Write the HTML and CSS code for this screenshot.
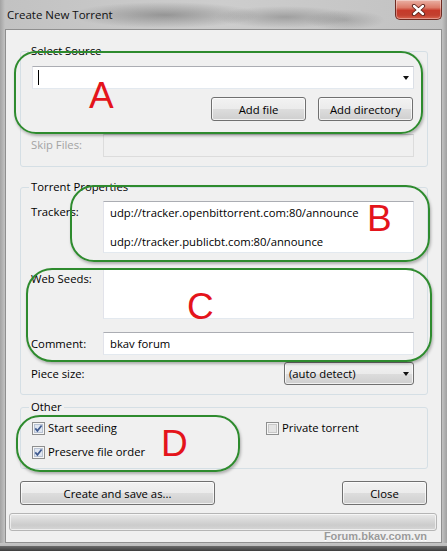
FILE: index.html
```html
<!DOCTYPE html>
<html>
<head>
<meta charset="utf-8">
<title>Create New Torrent</title>
<link rel="stylesheet" href="styles.css">
</head>
<body>
<div class="window">
  <div class="titlebar">
    <span class="title">Create New Torrent</span>
    <div class="close">
      <svg width="15" height="12" viewBox="0 0 15 12">
        <path d="M3 2 L12 10 M12 2 L3 10" stroke="#5a2019" stroke-width="4.2" stroke-linecap="round"/>
        <path d="M3 2 L12 10 M12 2 L3 10" stroke="#ffffff" stroke-width="2.4" stroke-linecap="round"/>
      </svg>
    </div>
  </div>
  <div class="client">
    <fieldset class="group g-source">
      <legend>Select Source</legend>
      <div class="combo edit"><span class="caret"></span><span class="arrow"></span></div>
      <div class="btnrow">
        <button class="btn w95">Add file</button>
        <button class="btn w95">Add directory</button>
      </div>
      <div class="row">
        <span class="lbl disabled">Skip Files:</span>
        <div class="input h23 dis"></div>
      </div>
    </fieldset>

    <fieldset class="group g-props">
      <legend>Torrent Properties</legend>
      <div class="row">
        <span class="lbl">Trackers:</span>
        <div class="input h52 multi">
          <div class="line">udp://tracker.openbittorrent.com:80/announce</div>
          <div class="line l2">udp://tracker.publicbt.com:80/announce</div>
        </div>
      </div>
      <div class="row mt15">
        <span class="lbl">Web Seeds:</span>
        <div class="input h51"></div>
      </div>
      <div class="row mt13">
        <span class="lbl pt5">Comment:</span>
        <div class="input h23 single">bkav forum</div>
      </div>
      <div class="row mt7 between">
        <span class="lbl pt5">Piece size:</span>
        <div class="dropdown">(auto detect)<span class="arrow"></span></div>
      </div>
    </fieldset>

    <fieldset class="group g-other">
      <legend>Other</legend>
      <div class="checks">
        <label class="chk"><svg class="cb" width="13" height="13" viewBox="0 0 13 13"><rect x="0.5" y="0.5" width="12" height="12" fill="#f6f6f6" stroke="#8e8f8f"/><rect x="2.5" y="2.5" width="8" height="8" fill="#dfe6f1" stroke="#b9c3d3"/><path d="M3.3 6.4 L5.4 8.8 L9.6 3.4" stroke="#3f5a8f" stroke-width="1.7" fill="none"/></svg><span>Start seeding</span></label>
        <label class="chk"><svg class="cb" width="13" height="13" viewBox="0 0 13 13"><rect x="0.5" y="0.5" width="12" height="12" fill="#f6f6f6" stroke="#8e8f8f"/><rect x="2.5" y="2.5" width="8" height="8" fill="#e4e4e4" stroke="#c8c8c8"/></svg><span>Private torrent</span></label>
        <label class="chk"><svg class="cb" width="13" height="13" viewBox="0 0 13 13"><rect x="0.5" y="0.5" width="12" height="12" fill="#f6f6f6" stroke="#8e8f8f"/><rect x="2.5" y="2.5" width="8" height="8" fill="#dfe6f1" stroke="#b9c3d3"/><path d="M3.3 6.4 L5.4 8.8 L9.6 3.4" stroke="#3f5a8f" stroke-width="1.7" fill="none"/></svg><span>Preserve file order</span></label>
      </div>
    </fieldset>

    <div class="actions">
      <button class="btn create">Create and save as...</button>
      <button class="btn closebtn">Close</button>
    </div>
    <div class="progress"></div>
    <div class="watermark">Forum.bkav.com.vn</div>

    <div class="mark ma"></div>
    <div class="mark mb"></div>
    <div class="mark mc"></div>
    <div class="mark md"></div>
    <span class="letter la">A</span>
    <span class="letter lb">B</span>
    <span class="letter lc">C</span>
    <span class="letter ld">D</span>
  </div>
  <div class="frame-bottom"></div>
</div>
</body>
</html>
```

FILE: styles.css
```css
* { box-sizing: border-box; }
html, body { margin: 0; padding: 0; }
body {
  width: 447px;
  height: 551px;
  overflow: hidden;
  font-family: "Open Sans", "Noto Sans", sans-serif;
  font-size: 11.3px;
  color: #000;
}
.window {
  width: 447px;
  height: 551px;
  display: flex;
  flex-direction: column;
  background:
    radial-gradient(ellipse 95px 13px at 165px 15px, rgba(70,70,70,.40), rgba(70,70,70,0)),
    radial-gradient(ellipse 70px 11px at 285px 17px, rgba(80,80,80,.35), rgba(80,80,80,0)),
    radial-gradient(ellipse 40px 10px at 345px 20px, rgba(90,90,90,.28), rgba(90,90,90,0)),
    linear-gradient(90deg, #a3a3a3 0, #c2c2c2 5px, #cdcdcd 50%, #c2c2c2 442px, #a0a0a0 447px);
}
.titlebar {
  height: 29px;
  flex: none;
  display: flex;
  align-items: flex-start;
}
.title {
  padding: 8px 0 0 7px;
  line-height: 14px;
  font-size: 11.5px;
  color: #111;
}
.close {
  margin-left: auto;
  margin-right: 5px;
  width: 47px;
  height: 20px;
  border: 1px solid #6e2b22;
  border-top: none;
  border-radius: 0 0 5px 5px;
  background: linear-gradient(#eab1a5 0, #dc7b69 40%, #c63a2a 55%, #c2402f 80%, #d9644f 100%);
  box-shadow: inset 0 0 0 1px rgba(255,255,255,.35);
  display: flex;
  align-items: center;
  justify-content: center;
}
.client {
  position: relative;
  margin: 0 5px 0 5px;
  height: 514px;
  flex: none;
  background: #f0f0f0;
  border: 1px solid #8f8f8f;
  padding-top: 14px;
  display: flex;
  flex-direction: column;
  overflow: hidden;
}
.frame-bottom {
  flex: 1;
  background: linear-gradient(#c4c4c4 0, #bcbcbc 3px, #6b6b6b 3px, #3d3d3d 100%);
}

/* group boxes */
.group {
  margin: 0 13px 0 14px;
  border: 1px solid #d5dfe5;
  border-radius: 3px;
  padding: 8px 13px 9px 11px;
  min-width: 0;
}
.group legend {
  padding: 0 2px;
  margin-left: -3px;
  line-height: 14px;
  font-size: 11.3px;
}
.g-props { margin-top: 13px; padding-top: 7px; }
.g-other { margin-top: 5px; padding-top: 1px; padding-bottom: 4px; }

.row { display: flex; align-items: flex-start; }
.between { justify-content: space-between; }
.mt15 { margin-top: 15px; }
.mt13 { margin-top: 13px; }
.mt7 { margin-top: 7px; }
.lbl {
  width: 72px;
  flex: none;
  margin-left: -1px;
  line-height: 14px;
  padding-top: 4px;
}
.lbl.pt5 { padding-top: 5px; }
.disabled { color: #a3a3a3; }

.input {
  flex: 1;
  background: #fff;
  border: 1px solid;
  border-color: #abadb3 #dbdfe6 #e3e9ef #e2e3ea;
}
.input.dis { background: #f0f0f0; border-color: #c9cacd #dcdcdc #dcdcdc #dcdcdc; }
.h23 { height: 23px; }
.h52 { height: 52px; }
.h51 { height: 51px; }
.multi { padding: 4px 6px 0; }
.line { line-height: 14px; white-space: nowrap; }
.line.l2 { margin-top: 15px; }
.single { padding: 3px 6px 0; line-height: 15px; }

.combo {
  height: 23px;
  display: flex;
  align-items: center;
  justify-content: space-between;
  border: 1px solid;
  border-color: #abadb3 #dbdfe6 #e3e9ef #e2e3ea;
  background: #fff;
  padding: 0 4px 0 5px;
}
.caret { width: 1px; height: 15px; background: #000; }
.arrow {
  width: 0;
  height: 0;
  border-left: 3.5px solid transparent;
  border-right: 3.5px solid transparent;
  border-top: 4px solid #111;
}

.btnrow {
  margin-top: 8px;
  display: flex;
  justify-content: flex-end;
  gap: 12px;
  padding-right: 1px;
  margin-bottom: 13px;
}
.btn {
  height: 24px;
  border: 1px solid #707070;
  border-radius: 3px;
  background: linear-gradient(#f2f2f2 0, #ebebeb 50%, #dddddd 50%, #cfcfcf 100%);
  box-shadow: inset 0 0 0 1px rgba(255,255,255,.7);
  font: inherit;
  font-size: 11.3px;
  color: #000;
  padding: 0;
  display: flex;
  align-items: center;
  justify-content: center;
}
.w95 { width: 95px; }

.dropdown {
  width: 130px;
  height: 23px;
  border: 1px solid #707070;
  border-radius: 3px;
  background: linear-gradient(#f2f2f2 0, #ebebeb 50%, #dddddd 50%, #cfcfcf 100%);
  box-shadow: inset 0 0 0 1px rgba(255,255,255,.7);
  display: flex;
  align-items: center;
  justify-content: space-between;
  padding: 0 4px 0 4px;
  line-height: 14px;
}

.checks {
  display: grid;
  grid-template-columns: 234px 1fr;
  grid-auto-rows: 24px;
  padding-top: 1px;
}
.chk {
  display: flex;
  align-items: center;
  gap: 3px;
  line-height: 14px;
}
.cb { flex: none; }

.actions {
  margin: 12px 14px 0 14px;
  display: flex;
  justify-content: space-between;
}
.create { width: 195px; }
.closebtn { width: 85px; }

.progress {
  margin: 8px 4px 0 3px;
  height: 18px;
  border: 1px solid #b5b5b5;
  border-radius: 3px;
  background: linear-gradient(#e9e9e9 0, #dadada 35%, #cccccc 70%, #d6d6d6 100%);
  box-shadow: inset 0 0 0 1px rgba(255,255,255,.6);
}
.watermark {
  align-self: flex-end;
  margin-right: 14px;
  font-family: "Liberation Sans", Arial, sans-serif;
  font-weight: bold;
  font-size: 11px;
  line-height: 11px;
  color: #9a9a9a;
  text-shadow: 0 1px 0 #fff;
}

/* annotation overlays */
.mark {
  position: absolute;
  border: 2px solid #2e8b2e;
  box-shadow: 1px 2px 3px rgba(0,0,0,.28);
  border-radius: 22px;
}
.ma { left: 8px; top: 21px; width: 409px; height: 83px; }
.mb { left: 64px; top: 155px; width: 360px; height: 77px; border-radius: 24px; }
.mc { left: 20px; top: 238px; width: 406px; height: 94px; border-radius: 26px; }
.md { left: 10px; top: 385px; width: 224px; height: 57px; border-radius: 24px; }
.letter {
  position: absolute;
  font-family: "Liberation Sans", Arial, sans-serif;
  font-size: 37px;
  line-height: 37px;
  color: #e4141b;
}
.la { left: 83px; top: 47px; }
.lb { left: 361px; top: 170px; }
.lc { left: 181px; top: 258px; }
.ld { left: 155px; top: 395px; }
```
